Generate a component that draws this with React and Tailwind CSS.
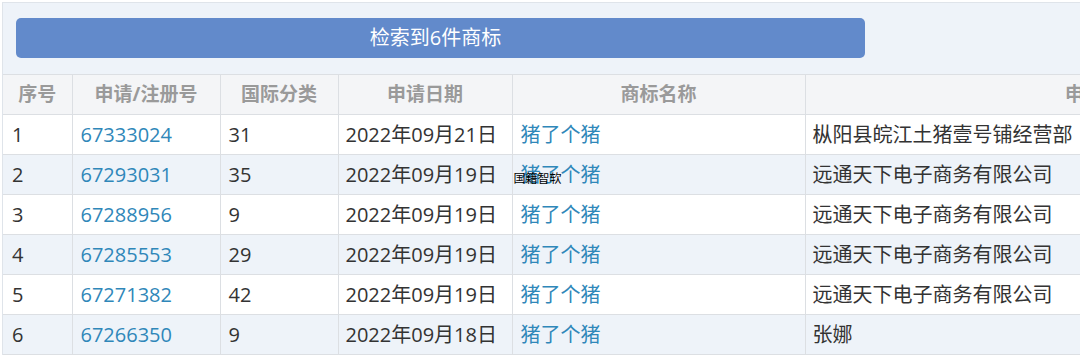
import React from 'react';

const rows = [
  { no: 1, reg: '67333024', cls: '31', date: '2022年09月21日', name: '猪了个猪', owner: '枞阳县皖江土猪壹号铺经营部' },
  { no: 2, reg: '67293031', cls: '35', date: '2022年09月19日', name: '猪了个猪', owner: '远通天下电子商务有限公司' },
  { no: 3, reg: '67288956', cls: '9', date: '2022年09月19日', name: '猪了个猪', owner: '远通天下电子商务有限公司' },
  { no: 4, reg: '67285553', cls: '29', date: '2022年09月19日', name: '猪了个猪', owner: '远通天下电子商务有限公司' },
  { no: 5, reg: '67271382', cls: '42', date: '2022年09月19日', name: '猪了个猪', owner: '远通天下电子商务有限公司' },
  { no: 6, reg: '67266350', cls: '9', date: '2022年09月18日', name: '猪了个猪', owner: '张娜' },
];

const headers = ['序号', '申请/注册号', '国际分类', '申请日期', '商标名称', '申请人名称'];

const App = () => {
  return (
    <div
      className="w-[1080px] h-[363px] overflow-hidden bg-white"
      style={{ fontFamily: '"Open Sans", "Noto Sans CJK SC", sans-serif' }}
    >
      <div className="ml-[2px] mt-[2px] border-l border-t border-[#dfe4ea] w-[1417px]">
        {/* result bar */}
        <div className="h-[71px] bg-[#eef3f9] pl-[13px] pt-[15px]">
          <div className="w-[849px] h-[40px] rounded-[5px] bg-[#628acb] flex items-center justify-center pr-[10px] text-white text-[20px]">
            检索到6件商标
          </div>
        </div>

        <table className="table-fixed border-collapse w-[1417px]">
          <colgroup>
            <col className="w-[69px]" />
            <col className="w-[148px]" />
            <col className="w-[118px]" />
            <col className="w-[174px]" />
            <col className="w-[293px]" />
            <col className="w-[615px]" />
          </colgroup>
          <thead>
            <tr className="h-[40px] bg-[#f4f5f7]">
              {headers.map((h) => (
                <th
                  key={h}
                  className="border border-[#dcdfe3] border-l-0 text-center font-bold text-[19px] text-[#9a9a9a] p-0"
                >
                  {h}
                </th>
              ))}
            </tr>
          </thead>
          <tbody>
            {rows.map((r, i) => (
              <tr key={r.no} className={`h-[40px] ${i % 2 === 1 ? 'bg-[#eef3f9]' : 'bg-white'}`}>
                <td className="border border-[#dcdfe3] border-l-0 pl-[9px] text-[20px] text-[#333]">{r.no}</td>
                <td className="border border-[#dcdfe3] pl-[8px] text-[20px] text-[#2f87b9]">{r.reg}</td>
                <td className="border border-[#dcdfe3] pl-[8px] text-[20px] text-[#333]">{r.cls}</td>
                <td className="border border-[#dcdfe3] pl-[7px] text-[20px] text-[#333]">{r.date}</td>
                <td className="relative border border-[#dcdfe3] pl-[8px] text-[20px] text-[#2f87b9]">
                  {r.name}
                  {i === 1 && (
                    <span className="absolute left-[1px] top-[18px] text-[12px] leading-none text-black">
                      国籍智软
                    </span>
                  )}
                </td>
                <td className="border border-[#dcdfe3] pl-[7px] text-[20px] text-[#333] whitespace-nowrap">{r.owner}</td>
              </tr>
            ))}
          </tbody>
        </table>
      </div>
    </div>
  );
};

export default App;
